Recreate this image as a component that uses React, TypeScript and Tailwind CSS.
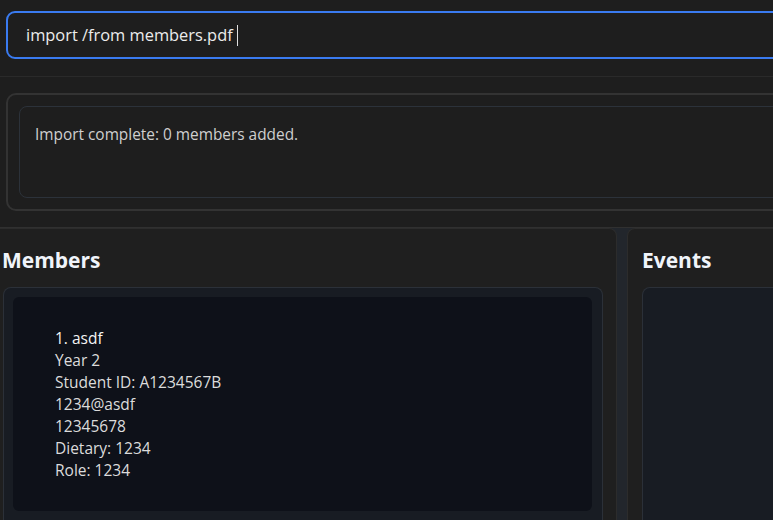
import React from "react";

export default function App() {
  const lines = ["Year 2", "Student ID: A1234567B", "1234@asdf", "12345678", "Dietary: 1234", "Role: 1234"];
  return (
    <div className="w-[773px] h-[520px] overflow-hidden bg-[#1e1e1e] flex flex-col font-['Open_Sans',sans-serif]">
      {/* command box */}
      <div className="h-[77px] shrink-0 pt-[11px] pl-[6px] border-b border-[#2a2a2a]">
        <div className="w-[800px] h-[48px] rounded-[9px] border-2 border-[#3a7bf0] bg-[#1e1e1e] flex items-center pl-[18px]">
          <span className="text-[16.4px] text-[#ececec]">import /from members.pdf</span>
          <span className="ml-[4px] w-px h-[21px] bg-[#e0e0e0]" />
        </div>
      </div>
      {/* result */}
      <div className="h-[151px] shrink-0 pt-[16px] pl-[6px] border-b border-[#303030]">
        <div className="w-[800px] h-[118px] rounded-[10px] border-2 border-[#333333] p-[11px]">
          <div className="h-full rounded-[8px] border border-[#2c323a] pl-[15px] pt-[15px]">
            <span className="text-[15.4px] text-[#cfcfcf]">Import complete: 0 members added.</span>
          </div>
        </div>
      </div>
      {/* panels */}
      <div className="flex flex-1 min-h-0 bg-[#22262c]">
        <div className="w-[617px] shrink-0 bg-[#1f1f1f] rounded-tr-[8px] border-t border-r border-[#2c2c2c] flex flex-col pl-[3px]">
          <div className="h-[58px] flex items-center pt-[5px]">
            <span className="text-[21px] font-bold text-[#f0f4fa] -ml-px">Members</span>
          </div>
          <div className="w-[600px] flex-1 rounded-t-[8px] border border-b-0 border-[#2b3038] bg-[#181c23] pt-[9px] pl-[9px]">
            <div className="w-[579px] h-[214px] rounded-[6px] bg-[#0e1119] pl-[42px] pt-[30px]">
              <div className="text-[15.5px] leading-[22px] font-medium text-[#f4f4f4]">1. asdf</div>
              {lines.map((l) => (
                <div key={l} className="text-[15.5px] leading-[22px] text-[#dcdcdc]">{l}</div>
              ))}
            </div>
          </div>
        </div>
        <div className="w-[10px] shrink-0" />
        <div className="flex-1 bg-[#1f1f1f] rounded-tl-[8px] border-t border-l border-[#2c2c2c] flex flex-col pl-[14px]">
          <div className="h-[58px] flex items-center pt-[5px]">
            <span className="text-[21px] font-bold text-[#f0f4fa]">Events</span>
          </div>
          <div className="w-[200px] flex-1 rounded-t-[8px] border border-b-0 border-[#2b3038] bg-[#181c23]" />
        </div>
      </div>
    </div>
  );
}
